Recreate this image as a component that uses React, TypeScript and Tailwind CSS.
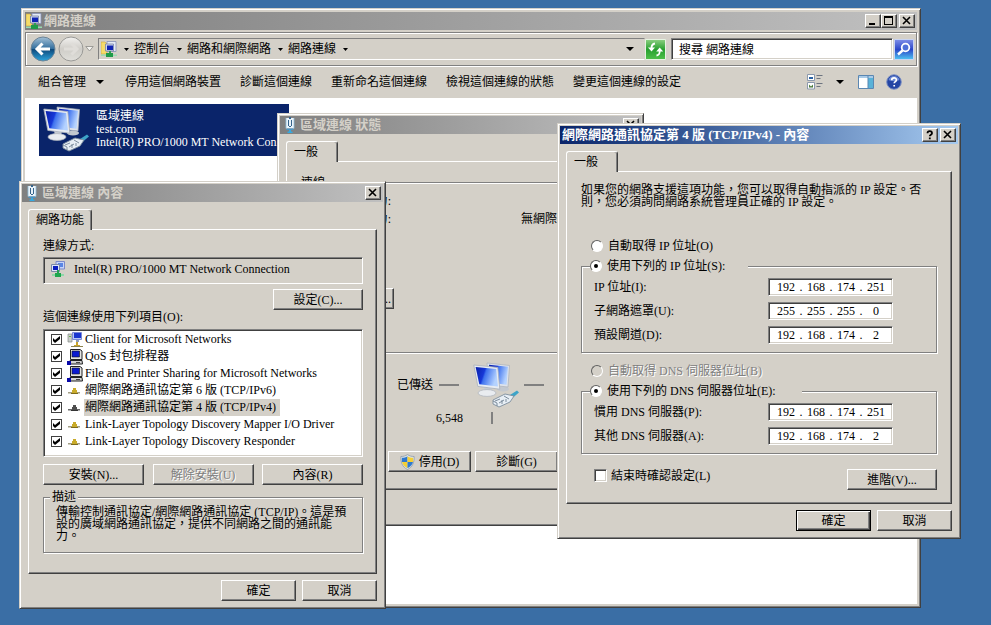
import { useState } from "react";
import type { ReactNode } from "react";

const raised =
  "border border-t-white border-l-white border-r-[#404040] border-b-[#404040] bg-[#d4d0c8] shadow-[inset_-1px_-1px_0_#808080]";
const sunken =
  "border border-t-[#808080] border-l-[#808080] border-r-white border-b-white shadow-[inset_1px_1px_0_#404040,inset_-1px_-1px_0_#d4d0c8]";
const frame =
  "border border-t-[#d4d0c8] border-l-[#d4d0c8] border-r-[#404040] border-b-[#404040] bg-[#d4d0c8] shadow-[inset_1px_1px_0_#fff,inset_-1px_-1px_0_#808080]";
const etched =
  "border border-[#808080] shadow-[1px_1px_0_#fff,inset_1px_1px_0_#fff]";
const disabledText = "text-[#808080] [text-shadow:1px_1px_0_#fff]";

/* ---------- icons ---------- */

function BigNetworkIcon() {
  return (
    <svg width="48" height="46" viewBox="0 0 48 46" aria-hidden="true" className="shrink-0">
      <defs>
        <linearGradient id="scr" x1="0" y1="0" x2="1" y2="0.3">
          <stop offset="0" stopColor="#0a1fa8" />
          <stop offset="0.42" stopColor="#1738d8" />
          <stop offset="0.5" stopColor="#3f72ee" />
          <stop offset="1" stopColor="#b4d2ff" />
        </linearGradient>
      </defs>
      <ellipse cx="30" cy="27" rx="6" ry="2.600" fill="#c3c8cf" />
      <path d="M14 1l22.500 2.500-1.500 21.500-19-2z" fill="#dfe3ea" stroke="#a9b0ba" strokeWidth=".7" />
      <path d="M16 2.800l19 2-1.500 18-15.500-2z" fill="url(#scr)" />
      <path d="M11 24h8l-1 7h-6z" fill="#c6cbd3" />
      <ellipse cx="14" cy="31" rx="9" ry="3.400" fill="#e9ecf0" stroke="#aab0b9" strokeWidth=".7" />
      <path d="M.8 3l24 2.400 2 21.800-22-2.800z" fill="#e8ecf2" stroke="#a9b0ba" strokeWidth=".8" />
      <path d="M2.600 4.900l20.600 2 1.700 17.700-18.600-2.400z" fill="url(#scr)" />
      <path d="M37 33l7-4.500 2 2-6 5z" fill="#3da4c8" />
      <path d="M20 38l12-6 9 2-4 6-11 5-6-3z" fill="#e7eef5" stroke="#7d8d9d" strokeWidth=".9" />
      <path d="M22 39l5-2M26 41l5-3M24 44v-3l-4-2M31 34l5 3M29 42v-4M33 40v-3" stroke="#7d8d9d" strokeWidth="1" fill="none" />
    </svg>
  );
}

function NetFolderIcon() {
  return (
    <svg width="16" height="16" viewBox="0 0 16 16" aria-hidden="true" className="shrink-0">
      <path d="M0 1h4l2 2v10H0z" fill="#f5dc6a" stroke="#c9a63a" strokeWidth=".6" />
      <path d="M6 .5h9v10H6z" fill="#e4eaf5" stroke="#8691b6" strokeWidth=".8" />
      <path d="M4.500 3h8v7h-8z" fill="#cfd8ec" stroke="#7681a6" strokeWidth=".8" />
      <path d="M6 4.500h6v4.500H6z" fill="#1024b4" />
      <path d="M8 10h2v2H8z" fill="#31a052" />
      <path d="M0 13.500h16V15H0z" fill="#9adbb0" />
      <path d="M5 12h7v4H5z" fill="#1f9a49" />
    </svg>
  );
}

function AdapterIcon() {
  return (
    <svg width="16" height="16" viewBox="0 0 16 16" aria-hidden="true" className="shrink-0">
      <path d="M6 .5h8.500v7.500H6z" fill="#c6d4f8" stroke="#7c89c8" />
      <path d="M8 2h5v4H8z" fill="#5a86e4" />
      <path d="M1.500 3.500h8v7h-8z" fill="#dfe6f8" stroke="#7c89a8" />
      <path d="M3 5h5v4H3z" fill="#0c1fc0" />
      <path d="M7 9h2v3H7z" fill="#24a352" />
      <path d="M2 13h12v2H2z" fill="#8fd8a8" />
      <path d="M5 12h6v4H5z" fill="#1fa64d" />
    </svg>
  );
}

function LanIcon() {
  return (
    <svg width="10" height="16" viewBox="0 0 10 16" aria-hidden="true" className="shrink-0">
      <path d="M1 1h8v10.500H1z" fill="#eaf3fa" />
      <path d="M1 1v10.500M9 1v10.500" stroke="#8fbcd8" strokeWidth=".8" />
      <path d="M4 0h2v2H4zM3 3h1v6H3zM6 3h1v6H6z" fill="#35648c" />
      <path d="M4 9h2v1H4z" fill="#35648c" />
      <path d="M1.500 11.500h7V13h-7z" fill="#4a94c4" />
      <path d="M4 13h2v1.500H4zM2.500 14.500h5V16h-5z" fill="#35a9e0" />
    </svg>
  );
}

function ClientIcon() {
  return (
    <svg width="16" height="16" viewBox="0 0 16 16" aria-hidden="true" className="shrink-0">
      <path d="M1 2h4v8H1z" fill="#c9ceca" stroke="#858a86" strokeWidth=".7" />
      <path d="M2 4h2v1H2z" fill="#67b04a" />
      <path d="M5.500 .5h9v7h-9z" fill="#b9c8f5" stroke="#7b89d5" />
      <path d="M7 1h7v5H7z" fill="#1a36cf" />
      <path d="M9 8h3v2H9z" fill="#8e9cb8" />
      <path d="M9 10h2v3h2v2H7v-2h2z" fill="#c9a52c" />
      <path d="M4 14h12v1H4z" fill="#8d8450" />
    </svg>
  );
}

function ServiceIcon() {
  return (
    <svg width="16" height="16" viewBox="0 0 16 16" aria-hidden="true" className="shrink-0">
      <path d="M3.500 .5h9.500l2 1.500v8.500H3.500z" fill="#e4e4e4" stroke="#222" />
      <path d="M5 2h7.500v6H5z" fill="#0a1ad0" stroke="#111" strokeWidth=".6" />
      <path d="M3 11.500h12l.5 3.500H2.500z" fill="#d4d4d4" stroke="#222" />
      <path d="M9 13h4v1H9z" fill="#444" />
      <path d="M0 12h4v4H0z" fill="#0808a8" />
    </svg>
  );
}

function ProtocolIcon({ muted = false }: { muted?: boolean }) {
  const body = muted ? "#4e4e4e" : "#c9ab2a";
  return (
    <svg width="16" height="16" viewBox="0 0 16 16" aria-hidden="true" className="shrink-0">
      <path d="M1 9h12v1.500H1z" fill={muted ? "#6a6a6a" : "#a39f86"} />
      <path d="M6 5h3v2h1v3H5V7h1z" fill={body} />
      <path d="M4 10h7v1H4z" fill={muted ? "#333" : "#7c6a1c"} />
    </svg>
  );
}

function ShieldIcon() {
  return (
    <svg width="15" height="16" viewBox="0 0 15 16" aria-hidden="true" className="shrink-0">
      <path d="M7.500 .6c2 1.400 4 1.900 6.600 1.900 .3 6-1.600 10.500-6.600 13C2.500 13 .6 8.500 .9 2.500 3.500 2.500 5.500 2 7.500 .6z" fill="#dfe6ec" stroke="#8b98a5" strokeWidth=".8" />
      <path d="M7.500 2.200V8H2C1.800 6.500 1.800 5 1.900 3.700c2.200 0 4-.5 5.600-1.500z" fill="#2e79cf" />
      <path d="M7.500 2.200c1.600 1 3.400 1.500 5.600 1.500 .1 1.300 .1 2.800-.1 4.300H7.500z" fill="#f4cf35" />
      <path d="M2 8h5.500v6.300C4.500 12.700 2.700 10.800 2 8z" fill="#f4cf35" />
      <path d="M13 8H7.500v6.300C10.500 12.700 12.300 10.800 13 8z" fill="#2e79cf" />
    </svg>
  );
}

function BackIcon() {
  return (
    <svg width="26" height="26" viewBox="0 0 26 26" aria-hidden="true">
      <defs>
        <linearGradient id="bk" x1="0" y1="0" x2="0" y2="1">
          <stop offset="0" stopColor="#a3c0d6" />
          <stop offset=".48" stopColor="#35709f" />
          <stop offset=".52" stopColor="#0f4a7c" />
          <stop offset="1" stopColor="#2ba4dc" />
        </linearGradient>
      </defs>
      <circle cx="13" cy="13" r="12" fill="url(#bk)" stroke="#6d8496" />
      <path d="M12.500 7.500L7 13l5.500 5.500M7.500 13H20" fill="none" stroke="#fff" strokeWidth="3" />
    </svg>
  );
}

function ForwardIcon() {
  return (
    <svg width="26" height="26" viewBox="0 0 26 26" aria-hidden="true">
      <defs>
        <linearGradient id="fw" x1="0" y1="0" x2="0" y2="1">
          <stop offset="0" stopColor="#f2f1ef" />
          <stop offset=".5" stopColor="#cfcdc8" />
          <stop offset="1" stopColor="#e0dfdb" />
        </linearGradient>
      </defs>
      <circle cx="13" cy="13" r="12" fill="url(#fw)" stroke="#9a9a97" />
      <path d="M13.500 7.500L19 13l-5.500 5.500M18.500 13H6" fill="none" stroke="#dfddd9" strokeWidth="3" />
    </svg>
  );
}

function Caret({ small = false }: { small?: boolean }) {
  return small ? (
    <svg width="5" height="3" viewBox="0 0 5 3" aria-hidden="true" className="shrink-0">
      <path d="M0 0h5L2.500 3z" />
    </svg>
  ) : (
    <svg width="8" height="4" viewBox="0 0 8 4" aria-hidden="true" className="shrink-0">
      <path d="M0 0h8L4 4z" />
    </svg>
  );
}

function RefreshIcon() {
  return (
    <svg width="21" height="21" viewBox="0 0 21 21" aria-hidden="true">
      <defs>
        <linearGradient id="rf" x1="0" y1="0" x2="0" y2="1">
          <stop offset="0" stopColor="#8ed083" />
          <stop offset=".5" stopColor="#27a02f" />
          <stop offset="1" stopColor="#4fc04a" />
        </linearGradient>
      </defs>
      <path d="M.5 .5h20v20H.5z" fill="url(#rf)" stroke="#e6f3e2" />
      <path d="M10 4.500C7 5 6.500 6.500 6.500 9" fill="none" stroke="#fff" strokeWidth="1.800" />
      <path d="M3 8.500h7l-3.500 4z" fill="#fff" />
      <path d="M11.500 16.500c3-.5 3.200-2 3.200-4.500" fill="none" stroke="#fff" strokeWidth="1.800" />
      <path d="M11.200 12.500h7l-3.500-4z" fill="#fff" />
    </svg>
  );
}

function SearchIcon() {
  return (
    <svg width="20" height="21" viewBox="0 0 20 21" aria-hidden="true">
      <defs>
        <linearGradient id="se" x1="0" y1="0" x2="0" y2="1">
          <stop offset="0" stopColor="#7f8fe8" />
          <stop offset=".5" stopColor="#2a46c8" />
          <stop offset="1" stopColor="#4fc4f2" />
        </linearGradient>
      </defs>
      <path d="M.5 .5h19v20H.5z" fill="url(#se)" stroke="#c8d4f2" />
      <circle cx="11.500" cy="8.500" r="3.800" fill="#4f70d8" stroke="#fff" strokeWidth="1.800" />
      <path d="M8.500 11.500L4 15.500" stroke="#fff" strokeWidth="2.400" />
    </svg>
  );
}

function ViewIcon() {
  return (
    <svg width="17" height="16" viewBox="0 0 17 16" aria-hidden="true">
      <path d="M.5 .5h7v6h-7zM.5 8.500h7v6.500h-7z" fill="#fff" stroke="#8b99ac" />
      <path d="M2 3h4v2H2z" fill="#2a62a4" />
      <path d="M2 10.500l2 2 2-2v3H2z" fill="#4b7b3c" />
      <path d="M9.500 1.500h6M9.500 4.500h4M9.500 9.500h6M9.500 12.500h4" stroke="#6d7480" />
    </svg>
  );
}

function PaneIcon() {
  return (
    <svg width="16" height="14" viewBox="0 0 16 14" aria-hidden="true">
      <path d="M.5 .5h15v13H.5z" fill="#fff" stroke="#5b87b2" />
      <path d="M1 1h14v2H1z" fill="#a9cbe8" />
      <path d="M10 3h5v10h-5z" fill="#59b2d8" />
      <path d="M10 1v12" stroke="#5b87b2" />
    </svg>
  );
}

function HelpIcon() {
  return (
    <svg width="16" height="16" viewBox="0 0 16 16" aria-hidden="true">
      <circle cx="8" cy="8" r="7.300" fill="#2445a4" stroke="#7f92c4" />
      <path d="M2.500 6a5.800 5.800 0 0 1 11 0c-3 1.500-8 1.500-11 0z" fill="#6d8ad6" />
      <path d="M5.700 6.200c0-3 4.700-3 4.700-.3 0 1.700-2.200 1.700-2.200 3.400M8.200 11v1.600" fill="none" stroke="#fff" strokeWidth="1.700" />
    </svg>
  );
}

/* ---------- controls ---------- */

function CaptionButton({ kind }: { kind: "min" | "max" | "close" | "help" }) {
  const names = { min: "最小化", max: "最大化", close: "關閉", help: "說明" };
  return (
    <button type="button" aria-label={names[kind]} className={`flex h-3.5 w-4 shrink-0 items-center justify-center ${raised}`}>
      <svg width="10" height="10" viewBox="0 0 10 10" aria-hidden="true" className="shrink-0">
        {kind === "min" && <path d="M1 7h6v2H1z" />}
        {kind === "max" && <path d="M0 0h9v9H0zM1 2v6h7V2z" fillRule="evenodd" />}
        {kind === "close" && <path d="M1 1l7 7M8 1L1 8" stroke="#000" strokeWidth="1.600" />}
        {kind === "help" && (
          <path d="M2.500 3.200c0-2.800 4.500-2.800 4.500 0 0 1.500-2.200 1.400-2.200 3M4.800 7.500v1.700" fill="none" stroke="#000" strokeWidth="1.800" />
        )}
      </svg>
    </button>
  );
}

function TitleBar({
  title,
  icon,
  active = false,
  buttons,
}: {
  title: string;
  icon?: ReactNode;
  active?: boolean;
  buttons: ReactNode;
}) {
  const tone = active
    ? "from-[#0a246a] to-[#a6caf0] text-white pl-0.5"
    : "from-[#808080] to-[#c0c0c0] text-[#d4d0c8]";
  return (
    <header className={`flex h-[18px] items-center bg-linear-to-r pr-0.5 ${tone}`}>
      {icon}
      <h2 className="min-w-0 grow truncate text-[13px] leading-[18px] font-bold">{title}</h2>
      {buttons}
    </header>
  );
}

function Button({
  children,
  className,
  disabled = false,
  primary = false,
}: {
  children: ReactNode;
  className: string;
  disabled?: boolean;
  primary?: boolean;
}) {
  const edge = primary
    ? "border border-black bg-[#d4d0c8] shadow-[inset_1px_1px_0_#fff,inset_-1px_-1px_0_#404040,inset_-2px_-2px_0_#808080]"
    : raised;
  return (
    <button
      type="button"
      disabled={disabled}
      className={`flex h-[21px] shrink-0 items-center whitespace-nowrap ${edge} ${disabled ? disabledText : ""} ${className}`}
    >
      {children}
    </button>
  );
}

function Tab({ label, className }: { label: string; className: string }) {
  return (
    <div role="tablist" className="flex">
      <button
        type="button"
        role="tab"
        aria-selected="true"
        className={`z-10 -mb-px flex h-[21px] items-center rounded-t-[3px] border border-b-0 border-t-white border-l-white border-r-[#404040] bg-[#d4d0c8] pl-[7px] shadow-[inset_-1px_0_0_#808080] ${className}`}
      >
        {label}
      </button>
    </div>
  );
}

const pane =
  "flex flex-col border border-t-white border-l-white border-r-[#404040] border-b-[#404040] shadow-[inset_-1px_-1px_0_#808080]";

function Check({ id, initial, size = "small" }: { id: string; initial: boolean; size?: "small" | "large" }) {
  const [on, setOn] = useState(initial);
  const box = size === "small" ? "size-[11px] border border-[#404040]" : `size-[13px] ${sunken}`;
  return (
    <span className="grid shrink-0 place-items-center">
      <input
        id={id}
        type="checkbox"
        checked={on}
        onChange={(e) => setOn(e.target.checked)}
        className={`col-start-1 row-start-1 appearance-none bg-white ${box}`}
      />
      {on && (
        <svg width="7" height="7" viewBox="0 0 7 7" aria-hidden="true" className="pointer-events-none col-start-1 row-start-1">
          <path d="M0 2l2 2 5-4v3L2 7 0 5z" />
        </svg>
      )}
    </span>
  );
}

function Radio({
  id,
  name,
  label,
  checked,
  disabled = false,
  onPick,
}: {
  id: string;
  name: string;
  label: string;
  checked: boolean;
  disabled?: boolean;
  onPick?: () => void;
}) {
  return (
    <div className="flex h-3 items-center gap-[5px]">
      <span className="grid size-3 shrink-0 place-items-center">
        <input
          id={id}
          type="radio"
          name={name}
          checked={checked}
          disabled={disabled}
          onChange={onPick}
          className="col-start-1 row-start-1 size-3 appearance-none rounded-full border border-t-[#606060] border-l-[#606060] border-r-white border-b-white bg-white disabled:bg-[#d4d0c8]"
        />
        {checked && <span className="pointer-events-none col-start-1 row-start-1 size-1 rounded-full bg-black" />}
      </span>
      <label htmlFor={id} className={`whitespace-nowrap ${disabled ? disabledText : ""}`}>
        {label}
      </label>
    </div>
  );
}

function AddressRow({ label, id, octets }: { label: string; id: string; octets: string[] }) {
  return (
    <div className="flex items-center justify-between">
      <label htmlFor={`${id}-0`}>{label}</label>
      <div className={`flex h-[18px] w-[125px] items-center bg-white pl-[5px] ${sunken}`}>
        {octets.map((octet, i) => (
          <span key={i} className="flex items-center">
            {i > 0 && <span className="w-1.5 text-center">.</span>}
            <input
              id={`${id}-${i}`}
              aria-label={`${label} ${i + 1}`}
              defaultValue={octet}
              maxLength={3}
              className="h-3 w-6 text-center outline-none"
            />
          </span>
        ))}
      </div>
    </div>
  );
}

/* ---------- windows ---------- */

const crumbs = ["控制台", "網路和網際網路", "網路連線"];
const commands = ["停用這個網路裝置", "診斷這個連線", "重新命名這個連線", "檢視這個連線的狀態", "變更這個連線的設定"];

function ExplorerWindow() {
  return (
    <section className={`absolute top-2 left-[21px] flex h-[600px] w-[900px] flex-col p-[3px] ${frame}`}>
      <TitleBar
        title="網路連線"
        icon={<span className="mr-0.5 ml-px flex"><NetFolderIcon /></span>}
        buttons={
          <div className="flex">
            <CaptionButton kind="min" />
            <CaptionButton kind="max" />
            <span className="w-0.5" />
            <CaptionButton kind="close" />
          </div>
        }
      />
      <nav className={`mt-0.5 flex h-[34px] items-center pr-0.5 pl-1 ${etched}`}>
        <button type="button" aria-label="上一頁" className="shrink-0"><BackIcon /></button>
        <button type="button" aria-label="下一頁" className="ml-0.5 shrink-0"><ForwardIcon /></button>
        <button type="button" aria-label="最近的頁面" className="ml-px shrink-0">
          <svg width="9" height="6" viewBox="0 0 9 6" aria-hidden="true">
            <path d="M.8 .5h7.400L4.500 5z" fill="#f4f3f0" stroke="#8a8a86" strokeWidth=".8" />
          </svg>
        </button>
        <div className="ml-1 flex h-[22px] grow items-center border border-t-[#808080] border-l-[#808080] border-r-[#d4d0c8] border-b-white pr-2.5 pl-0.5">
          <NetFolderIcon />
          <span className="ml-[7px] flex"><Caret small /></span>
          {crumbs.map((c) => (
            <span key={c} className="flex items-center">
              <a href="#crumb" className="ml-[5px] whitespace-nowrap">{c}</a>
              <span className="ml-[7px] flex"><Caret small /></span>
            </span>
          ))}
          <span className="grow" />
          <Caret />
        </div>
        <button type="button" aria-label="重新整理" className="shrink-0"><RefreshIcon /></button>
        <input
          type="text"
          aria-label="搜尋"
          defaultValue="搜尋 網路連線"
          className={`ml-[5px] h-[22px] w-[222px] bg-white pl-[7px] outline-none ${sunken}`}
        />
        <button type="button" aria-label="開始搜尋" className="ml-px shrink-0"><SearchIcon /></button>
      </nav>
      <div className="flex h-8 items-center pr-[15px] pl-[13px]">
        <button type="button" className="mr-[21px] flex items-center gap-2.5">
          組合管理
          <Caret />
        </button>
        <div className="flex gap-[19px]">
          {commands.map((c) => (
            <button key={c} type="button" className="whitespace-nowrap">{c}</button>
          ))}
        </div>
        <span className="grow" />
        <button type="button" aria-label="變更檢視" className="flex items-center gap-3"><ViewIcon /><Caret /></button>
        <button type="button" aria-label="預覽窗格" className="ml-[14px]"><PaneIcon /></button>
        <button type="button" aria-label="說明" className="ml-3"><HelpIcon /></button>
      </div>
      <main className="grow bg-white pt-1.5 pl-3.5">
        <div className="flex h-[52px] w-[250px] items-center bg-[#0a246a] pb-0.5 pl-1 text-white">
          <BigNetworkIcon />
          <div className="ml-[5px] leading-[13px] whitespace-nowrap">
            <p>區域連線</p>
            <p>test.com</p>
            <p>Intel(R) PRO/1000 MT Network Con...</p>
          </div>
        </div>
      </main>
    </section>
  );
}

function Separator({ label }: { label: string }) {
  return (
    <div className="flex items-center gap-1.5">
      <h3>{label}</h3>
      <span className="h-0.5 grow border-t border-b border-t-[#808080] border-b-white" />
    </div>
  );
}

function StatusWindow() {
  return (
    <section className={`absolute top-[113px] left-[277px] flex h-[413px] w-[367px] flex-col p-0.5 ${frame}`}>
      <TitleBar
        title="區域連線 狀態"
        icon={<span className="mr-[5px] ml-[5px] flex"><LanIcon /></span>}
        buttons={<CaptionButton kind="close" />}
      />
      <div className="flex grow flex-col px-1.5 pt-[7px] pb-[33px]">
        <Tab label="一般" className="w-[52px]" />
        <div className={`grow px-3.5 pt-[15px] ${pane}`}>
          <Separator label="連線" />
          <dl className="mt-[3px] pr-[15px] leading-[18px]">
            <div className="flex justify-between">
              <dt className="w-[90px] text-right">IPv4 連線能力:</dt>
              <dd>網際網路</dd>
            </div>
            <div className="flex justify-between">
              <dt className="w-[90px] text-right">IPv6 連線能力:</dt>
              <dd>無網際網路存取</dd>
            </div>
          </dl>
          <Button className="mt-[60px] w-[93px] justify-end pr-0.5">詳細資料(E)...</Button>
          <div className="mt-[38px]">
            <Separator label="活動" />
          </div>
          <div className="mt-[3px] flex items-center pl-24">
            <span>已傳送</span>
            <span className="ml-1.5 h-0.5 w-5 bg-[#808080]" />
            <span className="mr-[3px] ml-3.5 flex"><BigNetworkIcon /></span>
            <span className="h-0.5 w-5 bg-[#808080]" />
          </div>
          <div className="flex h-5 items-center">
            <span className="w-[162px] text-right">6,548</span>
            <span className="ml-7 h-3 w-0.5 bg-[#808080]" />
          </div>
          <div className="mt-[23px] flex gap-1">
            <Button className="w-[83px] justify-center">內容(P)</Button>
            <Button className="w-[83px] justify-center gap-1"><ShieldIcon />停用(D)</Button>
            <Button className="w-[83px] justify-center">診斷(G)</Button>
          </div>
        </div>
      </div>
    </section>
  );
}

const items: { label: string; icon: ReactNode; selected?: boolean }[] = [
  { label: "Client for Microsoft Networks", icon: <ClientIcon /> },
  { label: "QoS 封包排程器", icon: <ServiceIcon /> },
  { label: "File and Printer Sharing for Microsoft Networks", icon: <ServiceIcon /> },
  { label: "網際網路通訊協定第 6 版 (TCP/IPv6)", icon: <ProtocolIcon /> },
  { label: "網際網路通訊協定第 4 版 (TCP/IPv4)", icon: <ProtocolIcon muted />, selected: true },
  { label: "Link-Layer Topology Discovery Mapper I/O Driver", icon: <ProtocolIcon /> },
  { label: "Link-Layer Topology Discovery Responder", icon: <ProtocolIcon /> },
];

function PropertiesWindow() {
  return (
    <section className={`absolute top-[181px] left-[19px] flex h-[428px] w-[367px] flex-col p-0.5 ${frame}`}>
      <TitleBar
        title="區域連線 內容"
        icon={<span className="mr-[5px] ml-[5px] flex"><LanIcon /></span>}
        buttons={<CaptionButton kind="close" />}
      />
      <div className="flex grow flex-col px-1.5 pt-[7px] pb-[5px]">
        <Tab label="網路功能" className="w-16" />
        <div className={`grow pt-2.5 pr-[13px] pl-3.5 ${pane}`}>
          <p>連線方式:</p>
          <div className={`mt-[5px] flex h-[27px] items-center gap-2 pb-1 pl-1.5 ${sunken}`}>
            <AdapterIcon />
            <span>Intel(R) PRO/1000 MT Network Connection</span>
          </div>
          <div className="mt-[5px] flex justify-end">
            <Button className="w-[90px] justify-center">設定(C)...</Button>
          </div>
          <p className="mt-px">這個連線使用下列項目(O):</p>
          <ul className={`mt-1.5 h-32 bg-white py-px pl-[7px] ${sunken}`}>
            {items.map((item, i) => (
              <li key={item.label} className="flex h-[17px] items-center">
                <Check id={`item-${i}`} initial />
                <span className="ml-[5px] flex">{item.icon}</span>
                <label
                  htmlFor={`item-${i}`}
                  className={`ml-px h-[17px] pr-1 pl-px leading-[17px] whitespace-nowrap ${item.selected ? "bg-[#d4d0c8]" : ""}`}
                >
                  {item.label}
                </label>
              </li>
            ))}
          </ul>
          <div className="mt-[7px] flex justify-between">
            <Button className="w-[101px] justify-center">安裝(N)...</Button>
            <Button className="w-[101px] justify-center" disabled>解除安裝(U)</Button>
            <Button className="w-[101px] justify-center">內容(R)</Button>
          </div>
          <fieldset className={`mt-1.5 h-[62px] px-3 pt-[3px] ${etched}`}>
            <legend className="-ml-1.5 bg-[#d4d0c8] px-0.5">描述</legend>
            <p className="whitespace-nowrap">
              傳輸控制通訊協定/網際網路通訊協定 (TCP/IP)。這是預
              <br />
              設的廣域網路通訊協定，提供不同網路之間的通訊能
              <br />
              力。
            </p>
          </fieldset>
        </div>
        <div className="mt-1.5 flex justify-end gap-1.5">
          <Button className="w-[75px] justify-center">確定</Button>
          <Button className="w-[75px] justify-center">取消</Button>
        </div>
      </div>
    </section>
  );
}

function TcpIpWindow() {
  const [manual, setManual] = useState(true);
  return (
    <section className={`absolute top-[123px] left-[557px] flex h-[416px] w-[404px] flex-col p-0.5 ${frame}`}>
      <TitleBar
        active
        title="網際網路通訊協定第 4 版 (TCP/IPv4) - 內容"
        buttons={
          <div className="flex gap-0.5">
            <CaptionButton kind="help" />
            <CaptionButton kind="close" />
          </div>
        }
      />
      <div className="flex grow flex-col px-1.5 pt-[7px] pb-[5px]">
        <Tab label="一般" className="w-[52px]" />
        <div className={`grow pt-3 pr-3.5 pl-3.5 ${pane}`}>
          <p className="whitespace-nowrap">
            如果您的網路支援這項功能，您可以取得自動指派的 IP 設定。否
            <br />
            則，您必須詢問網路系統管理員正確的 IP 設定。
          </p>
          <div className="mt-8 pl-2.5">
            <Radio id="ip-auto" name="ip" label="自動取得 IP 位址(O)" checked={!manual} onPick={() => setManual(false)} />
          </div>
          <fieldset className={`mt-2 pt-1.5 pr-[43px] pb-2 pl-3 ${etched}`}>
            <legend className="-ml-1 w-[158px] bg-[#d4d0c8]">
              <Radio id="ip-manual" name="ip" label="使用下列的 IP 位址(S):" checked={manual} onPick={() => setManual(true)} />
            </legend>
            <div className="flex flex-col gap-1.5">
              <AddressRow id="ip" label="IP 位址(I):" octets={["192", "168", "174", "251"]} />
              <AddressRow id="mask" label="子網路遮罩(U):" octets={["255", "255", "255", "0"]} />
              <AddressRow id="gateway" label="預設閘道(D):" octets={["192", "168", "174", "2"]} />
            </div>
          </fieldset>
          <div className="mt-3 pl-2.5">
            <Radio id="dns-auto" name="dns" label="自動取得 DNS 伺服器位址(B)" checked={false} disabled />
          </div>
          <fieldset className={`mt-2 pt-1.5 pr-[43px] pb-2 pl-3 ${etched}`}>
            <legend className="-ml-1 w-[212px] bg-[#d4d0c8]">
              <Radio id="dns-manual" name="dns" label="使用下列的 DNS 伺服器位址(E):" checked onPick={() => undefined} />
            </legend>
            <div className="flex flex-col gap-1.5">
              <AddressRow id="dns-a" label="慣用 DNS 伺服器(P):" octets={["192", "168", "174", "251"]} />
              <AddressRow id="dns-b" label="其他 DNS 伺服器(A):" octets={["192", "168", "174", "2"]} />
            </div>
          </fieldset>
          <div className="mt-[15px] flex items-start justify-between pl-[13px]">
            <div className="flex items-center gap-1">
              <Check id="validate" initial={false} size="large" />
              <label htmlFor="validate">結束時確認設定(L)</label>
            </div>
            <Button className="w-[90px] justify-center">進階(V)...</Button>
          </div>
        </div>
        <div className="mt-1.5 flex justify-end gap-1.5">
          <Button primary className="w-[75px] justify-center">確定</Button>
          <Button className="w-[75px] justify-center">取消</Button>
        </div>
      </div>
    </section>
  );
}

export default function App() {
  return (
    <div className="relative min-h-screen w-full overflow-hidden bg-[#3a6ea5] font-['Liberation_Serif','Noto_Sans_CJK_TC',serif] text-[12px] leading-3 text-black">
      <ExplorerWindow />
      <StatusWindow />
      <PropertiesWindow />
      <TcpIpWindow />
    </div>
  );
}
